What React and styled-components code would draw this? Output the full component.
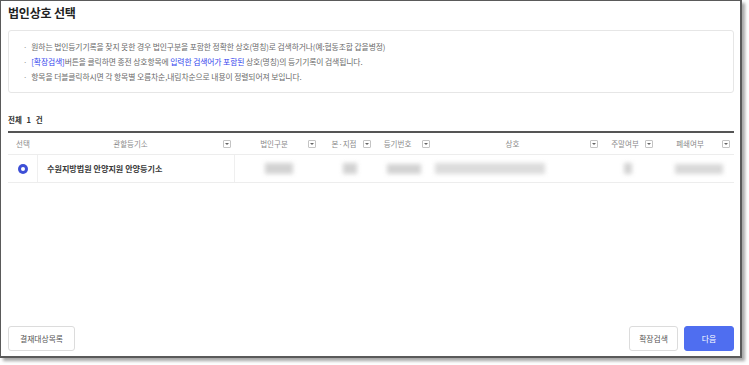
import React from "react";
import styled, { createGlobalStyle } from "styled-components";

const Global = createGlobalStyle`
  html, body { margin: 0; padding: 0; background: #fff; }
  body { font-family: "Noto Sans CJK KR", "Noto Sans", sans-serif; }
  * { box-sizing: border-box; }
`;

const Page = styled.div`
  width: 749px;
  height: 365px;
  background: #fff;
  overflow: hidden;
`;

const Window = styled.div`
  width: 742px;
  height: 358px;
  border: 1px solid #5a5a5a;
  border-right: 2px solid #5a5a5a;
  border-bottom: 2px solid #5a5a5a;
  box-shadow: 3px 3px 3px rgba(0, 0, 0, 0.35);
  background: #fff;
  display: flex;
  flex-direction: column;
  padding: 4px 6px 5px 7px;
`;

const Title = styled.h1`
  margin: 0;
  font-size: 12px;
  line-height: 16px;
  font-weight: 700;
  color: #222;
  letter-spacing: -0.2px;
`;

const InfoBox = styled.div`
  margin-top: 9px;
  border: 1px solid #e6e6e6;
  border-radius: 3px;
  padding: 8px 14px;
`;

const InfoLine = styled.div`
  font-size: 7.8px;
  line-height: 15px;
  color: #6a6a6a;
  white-space: nowrap;
  letter-spacing: -0.1px;
  &::before {
    content: "·";
    margin-right: 4px;
    color: #999;
  }
`;

const Blue = styled.span`
  color: #3344ee;
`;

const Count = styled.div`
  margin-top: 21px;
  font-size: 7.5px;
  line-height: 12px;
  font-weight: 700;
  color: #333;
  word-spacing: 3px;
`;

const Table = styled.div`
  margin-top: 5px;
  border-top: 2px solid #555;
`;

const Row = styled.div`
  display: grid;
  grid-template-columns: 30px 197px 90px 50px 57px 173px 52px 78px;
  height: ${(p) => p.$h}px;
  background: ${(p) => p.$bg || "#fff"};
  border-bottom: 1px solid #ededed;
`;

const HeadCell = styled.div`
  display: flex;
  align-items: center;
  justify-content: center;
  position: relative;
  font-size: 7.5px;
  color: #8a8a8a;
  padding-right: ${(p) => (p.$icon ? 12 : 0)}px;
`;

const HeadLabel = styled.span`
  flex: 1;
  text-align: center;
`;

const Drop = styled.span`
  width: 8px;
  height: 8px;
  border: 1px solid #c4c4c4;
  background: #fff;
  border-radius: 1px;
  display: flex;
  align-items: center;
  justify-content: center;
  position: absolute;
  right: ${(p) => p.$r}px;
  top: 50%;
  margin-top: -4px;
  &::after {
    content: "";
    border-left: 2px solid transparent;
    border-right: 2px solid transparent;
    border-top: 2px solid #666;
  }
`;

const Cell = styled.div`
  display: flex;
  align-items: center;
  justify-content: ${(p) => p.$align || "center"};
  padding-left: ${(p) => p.$pl || 0}px;
  border-right: ${(p) => (p.$sep ? "1px solid #efefef" : "none")};
  font-size: 8.1px;
  font-weight: 700;
  color: #3a3a3a;
`;

const Radio = styled.span`
  width: 10px;
  height: 10px;
  border-radius: 50%;
  background: #3d4fd6;
  display: flex;
  align-items: center;
  justify-content: center;
  &::after {
    content: "";
    width: 4px;
    height: 4px;
    border-radius: 50%;
    background: #fff;
  }
`;

const Blur = styled.span`
  display: block;
  width: ${(p) => p.$w}px;
  height: ${(p) => p.$h || 12}px;
  margin-left: ${(p) => p.$ml || 0}px;
  background: ${(p) => p.$c || "#c8c8c8"};
  filter: blur(2px);
  opacity: 0.8;
`;

const Spacer = styled.div`
  flex: 1;
`;

const Footer = styled.div`
  display: flex;
  align-items: center;
  gap: 6px;
`;

const Button = styled.button`
  height: 25px;
  width: ${(p) => p.$w}px;
  padding: 0;
  border-radius: 3px;
  border: 1px solid ${(p) => (p.$primary ? "#4f6ef0" : "#dcdcdc")};
  background: ${(p) => (p.$primary ? "#4f6ef0" : "#fff")};
  color: ${(p) => (p.$primary ? "#fff" : "#555")};
  font-family: "Noto Sans CJK KR", "Noto Sans", sans-serif;
  font-size: 7.8px;
  cursor: pointer;
`;

const FooterGap = styled.div`
  flex: 1;
`;

const headers = [
  { label: "선택" },
  { label: "관할등기소", r: 4 },
  { label: "법인구분", r: 9 },
  { label: "본·지점", r: 4 },
  { label: "등기번호", r: 2 },
  { label: "상호", r: 7 },
  { label: "주말여부", r: 4 },
  { label: "폐쇄여부", r: 5 },
];

export default function App() {
  return (
    <Page>
      <Global />
      <Window>
        <Title>법인상호 선택</Title>
        <InfoBox>
          <InfoLine>
            원하는 법인등기기록을 찾지 못한 경우 법인구분을 포함한 정확한 상호(명칭)로 검색하거나(예:협동조합 갑을병정)
          </InfoLine>
          <InfoLine>
            <Blue>[확장검색]</Blue>버튼을 클릭하면 종전 상호항목에 <Blue>입력한 검색어가 포함된</Blue> 상호(명칭)의 등기기록이 검색됩니다.
          </InfoLine>
          <InfoLine>항목을 더블클릭하시면 각 항목별 오름차순,내림차순으로 내용이 정렬되어져 보입니다.</InfoLine>
        </InfoBox>
        <Count>전체 1 건</Count>
        <Table>
          <Row $h={22}>
            {headers.map((h) => (
              <HeadCell key={h.label} $icon={h.r !== undefined}>
                <HeadLabel>{h.label}</HeadLabel>
                {h.r !== undefined && <Drop $r={h.r} />}
              </HeadCell>
            ))}
          </Row>
          <Row $h={28}>
            <Cell $sep>
              <Radio />
            </Cell>
            <Cell $sep $align="flex-start" $pl={9}>
              수원지방법원 안양지원 안양등기소
            </Cell>
            <Cell $align="flex-start" $pl={30}>
              <Blur $w={28} $h={11} />
            </Cell>
            <Cell $align="flex-start" $pl={18}>
              <Blur $w={14} $h={11} />
            </Cell>
            <Cell $align="flex-start" $pl={12}>
              <Blur $w={34} $h={10} />
            </Cell>
            <Cell $align="flex-start" $pl={3}>
              <Blur $w={110} $h={11} $c="#d4d4d4" />
            </Cell>
            <Cell $align="flex-start" $pl={19}>
              <Blur $w={8} $h={11} />
            </Cell>
            <Cell $align="flex-start" $pl={18}>
              <Blur $w={48} $h={10} $c="#cfcfcf" />
            </Cell>
          </Row>
        </Table>
        <Spacer />
        <Footer>
          <Button $w={67}>결재대상목록</Button>
          <FooterGap />
          <Button $w={49}>확장검색</Button>
          <Button $w={50} $primary>
            다음
          </Button>
        </Footer>
      </Window>
    </Page>
  );
}
